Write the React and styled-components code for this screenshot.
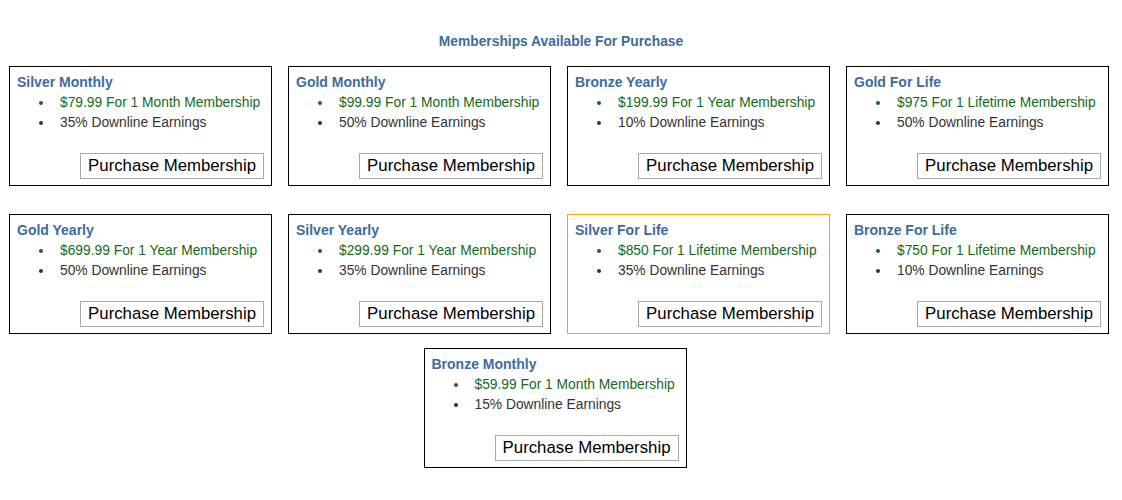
import { createGlobalStyle, styled } from 'styled-components'

const GlobalStyle = createGlobalStyle`
    body{
        margin: 0;
        background-color: #fff;
        font-family: "Liberation Sans", Arial, sans-serif;
    }
`

const Page = styled.main`
    width: 1122px;
    padding-top: 34px;
`

const Heading = styled.h3`
    margin: 0 0 16px 0;

    text-align: center;
    font-size: 13.8px;
    line-height: 16px;
    font-weight: bold;
    color: #3d6b9f;
`

const Grid = styled.section`
    padding: 0 13px 0 9px;

    display: grid;
    grid-template-columns: repeat(4, 1fr);
    column-gap: 16px;
    row-gap: 28px;
`

const LastRow = styled.section`
    margin-top: 14px;
    padding-right: 12px;

    display: flex;
    justify-content: center;
`

const Card = styled.article`
    box-sizing: border-box;
    height: 120px;
    width: ${({ $width }) => $width || 'auto'};
    padding: 5px 6px 6px 7px;

    display: flex;
    flex-direction: column;

    border: 1px solid ${({ $active }) => $active ? '#f7a400' : '#000'};
    background-color: #fff;
`

const Title = styled.h4`
    margin: 0;

    font-size: 14px;
    line-height: 20px;
    font-weight: bold;
    color: #3d6b9f;
`

const List = styled.ul`
    margin: 1px 0 0 0;
    padding-left: 37px;

    font-size: 13.8px;
    line-height: 20px;
    white-space: nowrap;

    li{
        padding-left: 6px;
        color: #333;
    }
    li:first-child{
        color: #15691a;
    }
`

const PurchaseButton = styled.button`
    margin-top: auto;
    margin-right: 1px;
    align-self: flex-end;
    padding: 2px 7px 2px 7px;

    font-family: "Liberation Sans", Arial, sans-serif;
    font-size: 16.8px;
    line-height: 20px;
    color: #000;
    background-color: #fff;
    border: 1px solid #a9a9a9;
    cursor: pointer;
`

const memberships = [
    { name: 'Silver Monthly', price: '$79.99 For 1 Month Membership', earnings: '35%' },
    { name: 'Gold Monthly', price: '$99.99 For 1 Month Membership', earnings: '50%' },
    { name: 'Bronze Yearly', price: '$199.99 For 1 Year Membership', earnings: '10%' },
    { name: 'Gold For Life', price: '$975 For 1 Lifetime Membership', earnings: '50%' },
    { name: 'Gold Yearly', price: '$699.99 For 1 Year Membership', earnings: '50%' },
    { name: 'Silver Yearly', price: '$299.99 For 1 Year Membership', earnings: '35%' },
    { name: 'Silver For Life', price: '$850 For 1 Lifetime Membership', earnings: '35%', active: true },
    { name: 'Bronze For Life', price: '$750 For 1 Lifetime Membership', earnings: '10%' },
]

const last = { name: 'Bronze Monthly', price: '$59.99 For 1 Month Membership', earnings: '15%' }

function MembershipCard({ item, width }){
    return(
        <Card $active={item.active} $width={width}>
            <Title>{item.name}</Title>
            <List>
                <li>{item.price}</li>
                <li>{item.earnings} Downline Earnings</li>
            </List>
            <PurchaseButton>Purchase Membership</PurchaseButton>
        </Card>
    )
}

export default function App(){
    return(
        <Page>
            <GlobalStyle/>
            <Heading>Memberships Available For Purchase</Heading>
            <Grid>
                {memberships.map(item => (
                    <MembershipCard key={item.name} item={item}/>
                ))}
            </Grid>
            <LastRow>
                <MembershipCard item={last} width="263px"/>
            </LastRow>
        </Page>
    )
}
